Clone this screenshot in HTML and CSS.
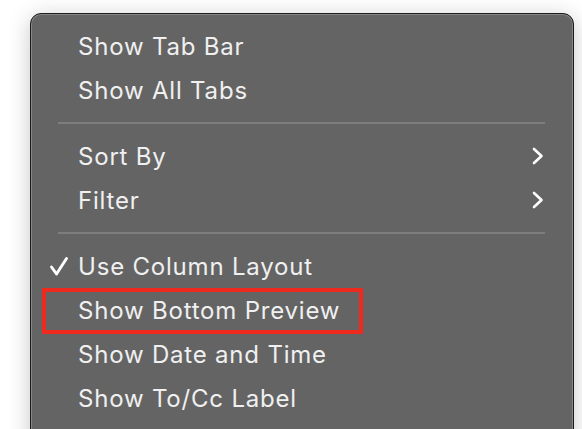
FILE: index.html
```html
<!DOCTYPE html>
<html>
<head>
<meta charset="utf-8">
<link rel="stylesheet" href="styles.css">
</head>
<body>
<div class="menu">
  <div class="item"><span class="label">Show Tab Bar</span></div>
  <div class="item"><span class="label">Show All Tabs</span></div>
  <div class="sep"><div class="line"></div></div>
  <div class="item"><span class="label">Sort By</span>
    <svg class="chev" width="12" height="18" viewBox="0 0 12 18"><path d="M2 2 L9.5 9 L2 16" fill="none" stroke="#ffffff" stroke-width="2.6" stroke-linecap="round" stroke-linejoin="round"/></svg>
  </div>
  <div class="item"><span class="label">Filter</span>
    <svg class="chev" width="12" height="18" viewBox="0 0 12 18"><path d="M2 2 L9.5 9 L2 16" fill="none" stroke="#ffffff" stroke-width="2.6" stroke-linecap="round" stroke-linejoin="round"/></svg>
  </div>
  <div class="sep"><div class="line"></div></div>
  <div class="item"><span class="check"><svg width="20" height="21" viewBox="0 0 20 21"><path d="M2.5 11 L7.5 18 L17.5 2.5" fill="none" stroke="#ffffff" stroke-width="2.9" stroke-linecap="round" stroke-linejoin="round"/></svg></span><span class="label">Use Column Layout</span></div>
  <div class="item"><span class="label">Show Bottom Preview</span><span class="highlight"></span></div>
  <div class="item"><span class="label">Show Date and Time</span></div>
  <div class="item"><span class="label">Show To/Cc Label</span></div>
</div>
</body>
</html>
```
FILE: styles.css
```css
html, body {
  margin: 0;
  padding: 0;
  background: #ffffff;
  overflow: hidden;
  height: 429px;
}
body {
  font-family: Inter, "Liberation Sans", sans-serif;
}
.menu {
  margin: 13px 0 0 30px;
  width: 544px;
  height: 470px;
  background: #646464;
  border: 1px solid #1c1c1c;
  border-radius: 11px;
  box-shadow: inset 0 0 0 1px rgba(255,255,255,0.22), 0 4px 22px rgba(0,0,0,0.22);
  padding-top: 10px;
  box-sizing: border-box;
  overflow: hidden;
}
.item {
  position: relative;
  height: 44px;
  display: flex;
  align-items: center;
  padding-left: 47px;
  color: #f0f0f0;
  font-size: 24px;
  letter-spacing: 0.8px;
}
.label {
  white-space: nowrap;
}
.check {
  position: absolute;
  left: 18px;
  top: 12px;
  width: 20px;
  height: 21px;
}
.check svg { display: block; }
.chev {
  position: absolute;
  right: 29px;
  top: 13px;
  display: block;
}
.sep {
  height: 22px;
  padding: 10px 28px 0 27px;
  box-sizing: border-box;
}
.sep .line {
  height: 2px;
  background: #7d7d7d;
}
.highlight {
  position: absolute;
  left: 11px;
  top: 0;
  width: 321px;
  height: 46px;
  border: 4px solid #ee2a1e;
  box-sizing: border-box;
}
```
